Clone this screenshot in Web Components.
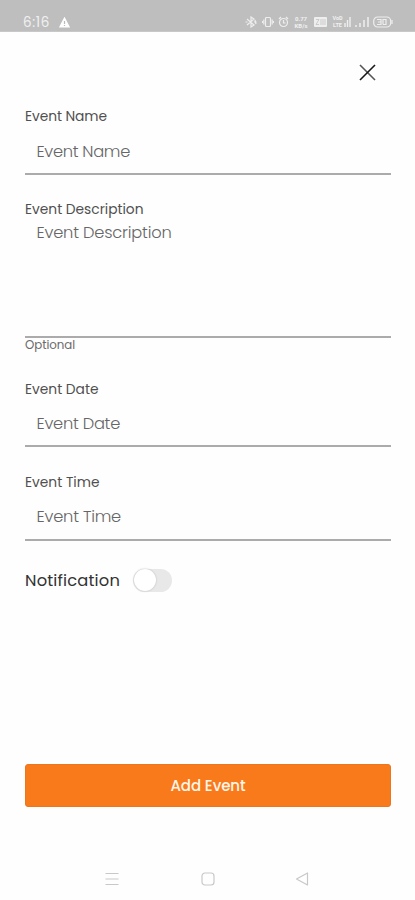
<!DOCTYPE html>
<html lang="en"><head><meta charset="utf-8"><title>Add Event</title>
<style>
body{margin:0;background:#fefefe;font-family:Poppins,Inter,"Liberation Sans",sans-serif}
</style></head><body>
<event-screen></event-screen>
<script>
const define=(name,html,after)=>customElements.define(name,class extends HTMLElement{
  connectedCallback(){
    if(this.shadowRoot)return;
    this.attachShadow({mode:'open'}).innerHTML=html(this);
    if(after)after(this);
  }
});

// Text tracked so that its line occupies the given width.
define('fit-text',e=>`<style>:host{display:block;white-space:nowrap}span{display:inline-block}</style><span>${e.getAttribute('text')}</span>`,e=>{
  const s=e.shadowRoot.querySelector('span'),w=+e.getAttribute('width');
  s.style.letterSpacing=(w-s.getBoundingClientRect().width)/e.getAttribute('text').length+'px';
});

define('status-bar',()=>`<style>
:host{display:flex;box-sizing:border-box;height:32px;background:#bebebe;color:#f0f0f0;padding:13px 22px 0 23px;align-items:flex-start;border-bottom:1px solid #c8c8c8}
.time{font-size:13.5px;line-height:20px}
svg{display:block;fill:none;stroke:#eee;stroke-width:1.2}
.warn{margin:4px 0 0 9px}.right{margin:2px 0 0 auto;display:flex;align-items:center;height:14px}
.tiny{display:flex;flex-direction:column;align-items:center;font:700 6px/7px Roboto,sans-serif}
.speed{margin-left:3px;width:18px}
.volte{font-size:5.500px;margin-left:4px;width:13px}
</style>
<fit-text class="time" text="6:16" width="27"></fit-text>
<svg class="warn" width="11" height="11" viewBox="0 0 11 11"><path d="M5.5 1 10.2 10H.8Z" fill="#fff" stroke="#fff"/><path d="M5.5 4v3M5.5 8v1" stroke="#bbb"/></svg>
<div class="right">
<svg width="12" height="12" viewBox="0 0 12 12"><path d="m2 3 7 6-3 2V1l3 2-7 6M.5 6h2M9 6h2.5M10 4l1 4"/></svg>
<svg style="margin-left:5px" width="12" height="12" viewBox="0 0 12 12"><rect x="3.5" y="1.5" width="5" height="9" rx="1"/><path d="M1.8 3.5v5M10.2 3.5v5M.4 5v2M11.6 5v2"/></svg>
<svg style="margin-left:4px" width="11" height="12" viewBox="0 0 11 12"><circle cx="5.5" cy="6.5" r="4"/><path d="M5.5 4v3h2M1 3l2-2M10 3 8 1"/></svg>
<div class="tiny speed"><span>0.77</span><span>KB/s</span></div>
<svg style="margin-left:4px" width="13" height="12" viewBox="0 0 13 12"><rect x="0" y="1" width="13" height="10" rx="1" fill="#eee" stroke="none"/><path d="M2 3.5h3L2 8.500h3M7 3v6M9 3v6M11 3v6" stroke="#bbb" stroke-width=".7"/></svg>
<div class="tiny volte"><span>VoD</span><span>LTE</span></div>
<svg width="7" height="12" viewBox="0 0 7 12"><path d="M1 11V7M3.500 11V4M6 11V1" stroke-width="1.4"/></svg>
<svg style="margin-left:4px" width="14" height="12" viewBox="0 0 14 12"><path d="M1 11V9M5 11V7M9 11V4M13 11V1" stroke-width="1.5"/></svg>
<svg style="margin-left:4px" width="20" height="12" viewBox="0 0 20 12"><rect x=".7" y="1" width="17" height="10" rx="4"/><path d="M19 4v4"/><path d="M4 3.500h4v5H4M5 6h3M10 8.500v-5h3v5h-3"/></svg>
</div>`);

define('close-button',()=>`<style>:host{display:block;width:17px;height:17px}svg{display:block}</style>
<svg width="17" height="17" viewBox="0 0 17 17" fill="none" stroke-width="1.6"><path d="m1 1 15 15" stroke="#555"/><path d="M16 1 1 16" stroke="#181818"/></svg>`);

define('form-field',e=>`<style>
:host{display:block}
.label{font-size:13.800px;line-height:20px;color:#505050}
.input{box-sizing:border-box;height:var(--input-height,46px);padding:var(--input-pad,12px) 0 0 11.500px;font-size:16.300px;line-height:24px;color:#666;font-weight:300}
.line{height:2px;margin-bottom:-1px;background:#ababab}
.note{font-size:11.800px;line-height:16px;color:#6a6a6a}
</style><fit-text class="label" text="${e.getAttribute('label')}" width="${e.getAttribute('lw')}"></fit-text>
<div class="input"><fit-text text="${e.getAttribute('label')}" width="${e.getAttribute('pw')}"></fit-text></div>
<div class="line"></div>
<div class="note"><slot></slot></div>`);

define('toggle-switch',()=>`<style>
:host{display:flex;align-items:center;box-sizing:border-box;width:39px;height:23px;border-radius:12px;background:#e8e8e8}
i{width:22px;height:22px;border-radius:50%;background:#fff;box-shadow:0 0 2px #b5b5b5;margin-left:1px}
</style><i></i>`);

define('primary-button',()=>`<style>
:host{display:flex;box-sizing:border-box;height:43px;border-radius:3px;background:#f97a1b;border:1px solid #ed751b;color:#fff6ea;align-items:center;justify-content:center;font-size:15px;line-height:22px;font-weight:500}
</style><slot></slot>`);

define('nav-bar',()=>`<style>:host{display:flex;justify-content:space-between;padding:0 105px}svg{display:block;fill:none;stroke:#c8c8c8;stroke-width:1.2}</style>
<svg width="14" height="14" viewBox="0 0 14 14"><path d="M.5 1.500h13M.5 7h13M.5 12.500h13"/></svg>
<svg width="14" height="14" viewBox="0 0 14 14"><rect x="1" y="1" width="12" height="12" rx="3"/></svg>
<svg width="14" height="14" viewBox="0 0 14 14"><path d="M11.500 1v12L.5 7Z" stroke-linejoin="round"/></svg>`);

define('event-screen',()=>`<style>
:host{display:flex;flex-direction:column;height:900px;overflow:hidden}
main{display:flex;flex-direction:column;padding:0 24px 0 25px}
close-button{align-self:flex-end;margin:32px 15px 0 0}
.f1{margin-top:26px;--input-pad:13px}
.f2{margin-top:26px;--input-height:116px;--input-pad:1px}
.f3{margin-top:27px;--input-height:45px}
.f4{margin-top:27px}
.switch{display:flex;align-items:center;height:24px;margin-top:28px;gap:13px;font-size:16.300px;line-height:24px;color:#333}
.switch fit-text{padding-top:1px}
primary-button{margin-top:172px}
nav-bar{margin-top:65px}
</style>
<status-bar></status-bar>
<main>
<close-button></close-button>
<form-field class="f1" label="Event Name" lw="82" pw="93.500"></form-field>
<form-field class="f2" label="Event Description" lw="118.500" pw="135"><fit-text text="Optional" width="50"></fit-text></form-field>
<form-field class="f3" label="Event Date" lw="73.500" pw="83.500"></form-field>
<form-field class="f4" label="Event Time" lw="74.500" pw="84.500"></form-field>
<div class="switch"><fit-text text="Notification" width="95"></fit-text><toggle-switch></toggle-switch></div>
<primary-button><fit-text text="Add Event" width="75"></fit-text></primary-button>
</main>
<nav-bar></nav-bar>`);
</script></body></html>
